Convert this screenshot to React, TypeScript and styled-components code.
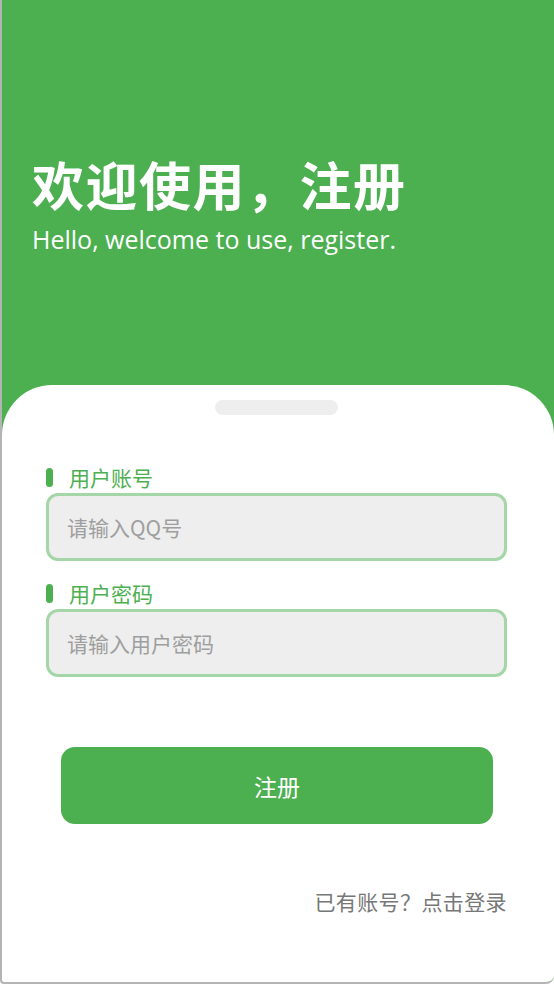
import styled, { createGlobalStyle } from "styled-components";

const GlobalStyle = createGlobalStyle`
  * {
    box-sizing: border-box;
  }

  body {
    margin: 0;
    background: #ffffff;
    font-family: "Noto Sans", "Noto Sans CJK SC", sans-serif;
  }
`;

const Page = styled.div`
  min-height: 984px;
  display: flex;
  flex-direction: column;
  background: #4caf50;
  border-left: 2px solid #b4b4b4;
  border-bottom: 2px solid #b4b4b4;
  border-bottom-right-radius: 8px;
  border-bottom-left-radius: 4px;
  overflow: hidden;
`;

const Header = styled.header`
  height: 385px;
  padding: 152px 30px 0;
  color: #ffffff;
`;

const Title = styled.h1`
  margin: 0;
  font-family: "Noto Sans CJK SC", sans-serif;
  font-size: 52px;
  font-weight: 600;
  line-height: 64px;
  letter-spacing: 1.5px;
`;

const Subtitle = styled.p`
  margin: 8px 0 0;
  font-family: "Open Sans", "Noto Sans", sans-serif;
  font-size: 25px;
  line-height: 30px;
`;

const Card = styled.main`
  flex: 1;
  display: flex;
  flex-direction: column;
  background: #ffffff;
  border-radius: 50px 50px 0 0;
  padding: 15px 47px 0 44px;
`;

const Grabber = styled.div`
  align-self: center;
  width: 123px;
  height: 15px;
  border-radius: 8px;
  background: #eeeeee;
`;

const Form = styled.form`
  display: flex;
  flex-direction: column;
  margin-top: 50px;
`;

const Label = styled.label<{ $first?: boolean }>`
  display: flex;
  align-items: center;
  gap: 16px;
  margin-top: ${(p) => (p.$first ? "0" : "20px")};
  height: 24px;
  color: #4caf50;
  font-family: "Noto Sans CJK SC", sans-serif;
  font-size: 21px;
  line-height: 22px;

  &::before {
    content: "";
    width: 7px;
    height: 19px;
    border-radius: 4px;
    background: #4caf50;
  }
`;

const Input = styled.input`
  margin-top: 4px;
  height: 68px;
  width: 100%;
  padding: 0 18px;
  border: 3px solid #a5d6a7;
  border-radius: 12px;
  background: #eeeeee;
  color: #333333;
  font-family: "Noto Sans CJK SC", sans-serif;
  font-size: 21px;
  outline: none;

  &::placeholder {
    color: #9e9e9e;
  }
`;

const SubmitButton = styled.button`
  margin: 70px 14px 0 15px;
  height: 77px;
  border: none;
  border-radius: 14px;
  background: #4caf50;
  color: #ffffff;
  font-family: "Noto Sans CJK SC", sans-serif;
  font-size: 23px;
  cursor: pointer;
`;

const Footer = styled.div`
  display: flex;
  justify-content: flex-end;
  margin-top: 64px;
`;

const LoginLink = styled.a`
  color: #777777;
  font-family: "Noto Sans CJK SC", sans-serif;
  font-size: 21px;
  line-height: 26px;
  letter-spacing: 0.4px;
  text-decoration: none;
  cursor: pointer;
`;

export default function App() {
  return (
    <>
      <GlobalStyle />
      <Page>
        <Header>
          <Title>欢迎使用，注册</Title>
          <Subtitle>Hello, welcome to use, register.</Subtitle>
        </Header>
        <Card>
          <Grabber />
          <Form onSubmit={(e) => e.preventDefault()}>
            <Label $first htmlFor="account">
              用户账号
            </Label>
            <Input id="account" placeholder="请输入QQ号" />
            <Label htmlFor="password">用户密码</Label>
            <Input id="password" type="password" placeholder="请输入用户密码" />
            <SubmitButton type="submit">注册</SubmitButton>
          </Form>
          <Footer>
            <LoginLink>已有账号？点击登录</LoginLink>
          </Footer>
        </Card>
      </Page>
    </>
  );
}
